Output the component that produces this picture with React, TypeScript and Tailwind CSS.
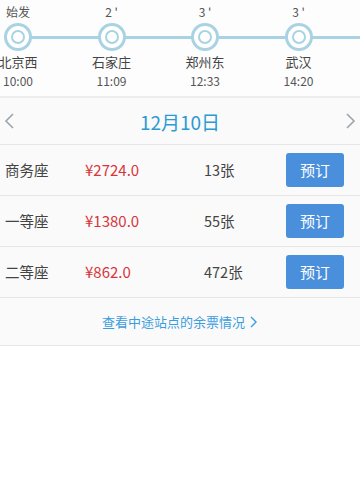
import React from 'react';

const stations = [
  { top: '始发', name: '北京西', time: '10:00' },
  { top: "2 '", name: '石家庄', time: '11:09' },
  { top: "3 '", name: '郑州东', time: '12:33' },
  { top: "3 '", name: '武汉', time: '14:20' },
];

const seats = [
  { name: '商务座', price: '¥2724.0', count: '13张' },
  { name: '一等座', price: '¥1380.0', count: '55张' },
  { name: '二等座', price: '¥862.0', count: '472张' },
];

const Ring: React.FC = () => (
  <div className="h-[28px] w-[28px] rounded-full border-[3px] border-[#a9d3e2] bg-white flex items-center justify-center">
    <div className="h-[14px] w-[14px] rounded-full border-2 border-[#a9d3e2]" />
  </div>
);

const App: React.FC = () => {
  return (
    <div
      className="w-[360px] h-[496px] bg-white text-[#333]"
      style={{ fontFamily: '"Noto Sans CJK SC", Roboto, sans-serif' }}
    >
      {/* stops */}
      <div className="relative h-[96px] bg-[#fdfdfd] overflow-hidden">
        <div className="absolute left-[18px] right-0 top-[36px] h-[3px] bg-[#a9d3e2]" />
        <div className="relative flex gap-[33.5px] -ml-[12px]">
          {stations.map((s, i) => (
            <div key={i} className="w-[60px] shrink-0 flex flex-col items-center">
              <div className="h-[23px] pt-[3px] text-[12px] leading-[18px] text-[#555]">{s.top}</div>
              <Ring />
              <div className="mt-[1px] text-[13px] leading-[20px] text-[#444] whitespace-nowrap">{s.name}</div>
              <div className="text-[12px] leading-[18px] text-[#555]">{s.time}</div>
            </div>
          ))}
        </div>
      </div>

      <div className="border-t-2 border-[#ececec] bg-[#fafafa]">
        {/* date switch */}
        <div className="flex items-center justify-between h-[47px] px-[3px] border-b border-[#e6e6e6]">
          <svg width="14" height="20" viewBox="0 0 14 20" fill="none" stroke="#9aa5ae" strokeWidth="1.6">
            <path d="M10 3 L3 10 L10 17" />
          </svg>
          <div className="text-[19px] text-[#2b9bd2] leading-none">12月10日</div>
          <svg width="14" height="20" viewBox="0 0 14 20" fill="none" stroke="#9aa5ae" strokeWidth="1.6">
            <path d="M4 3 L11 10 L4 17" />
          </svg>
        </div>

        {seats.map((s) => (
          <div key={s.name} className="flex items-center h-[51px] border-b border-[#e6e6e6]">
            <div className="w-[85px] pl-[5px] text-[14.5px] text-[#444]">{s.name}</div>
            <div className="w-[119px] text-[15px] text-[#d9353b]">{s.price}</div>
            <div className="w-[82px] text-[14.5px] text-[#444]">{s.count}</div>
            <button className="w-[58px] h-[34px] rounded-[3px] bg-[#4a8fdc] text-white text-[15px]">预订</button>
          </div>
        ))}

        <div className="h-[48px] flex items-center justify-center border-b border-[#e6e6e6] text-[13px] text-[#3a9de0]">
          查看中途站点的余票情况
          <svg width="10" height="14" viewBox="0 0 10 14" fill="none" stroke="#3a9de0" strokeWidth="1.4" className="ml-[3px]">
            <path d="M3 2 L8 7 L3 12" />
          </svg>
        </div>
      </div>
    </div>
  );
};

export default App;
